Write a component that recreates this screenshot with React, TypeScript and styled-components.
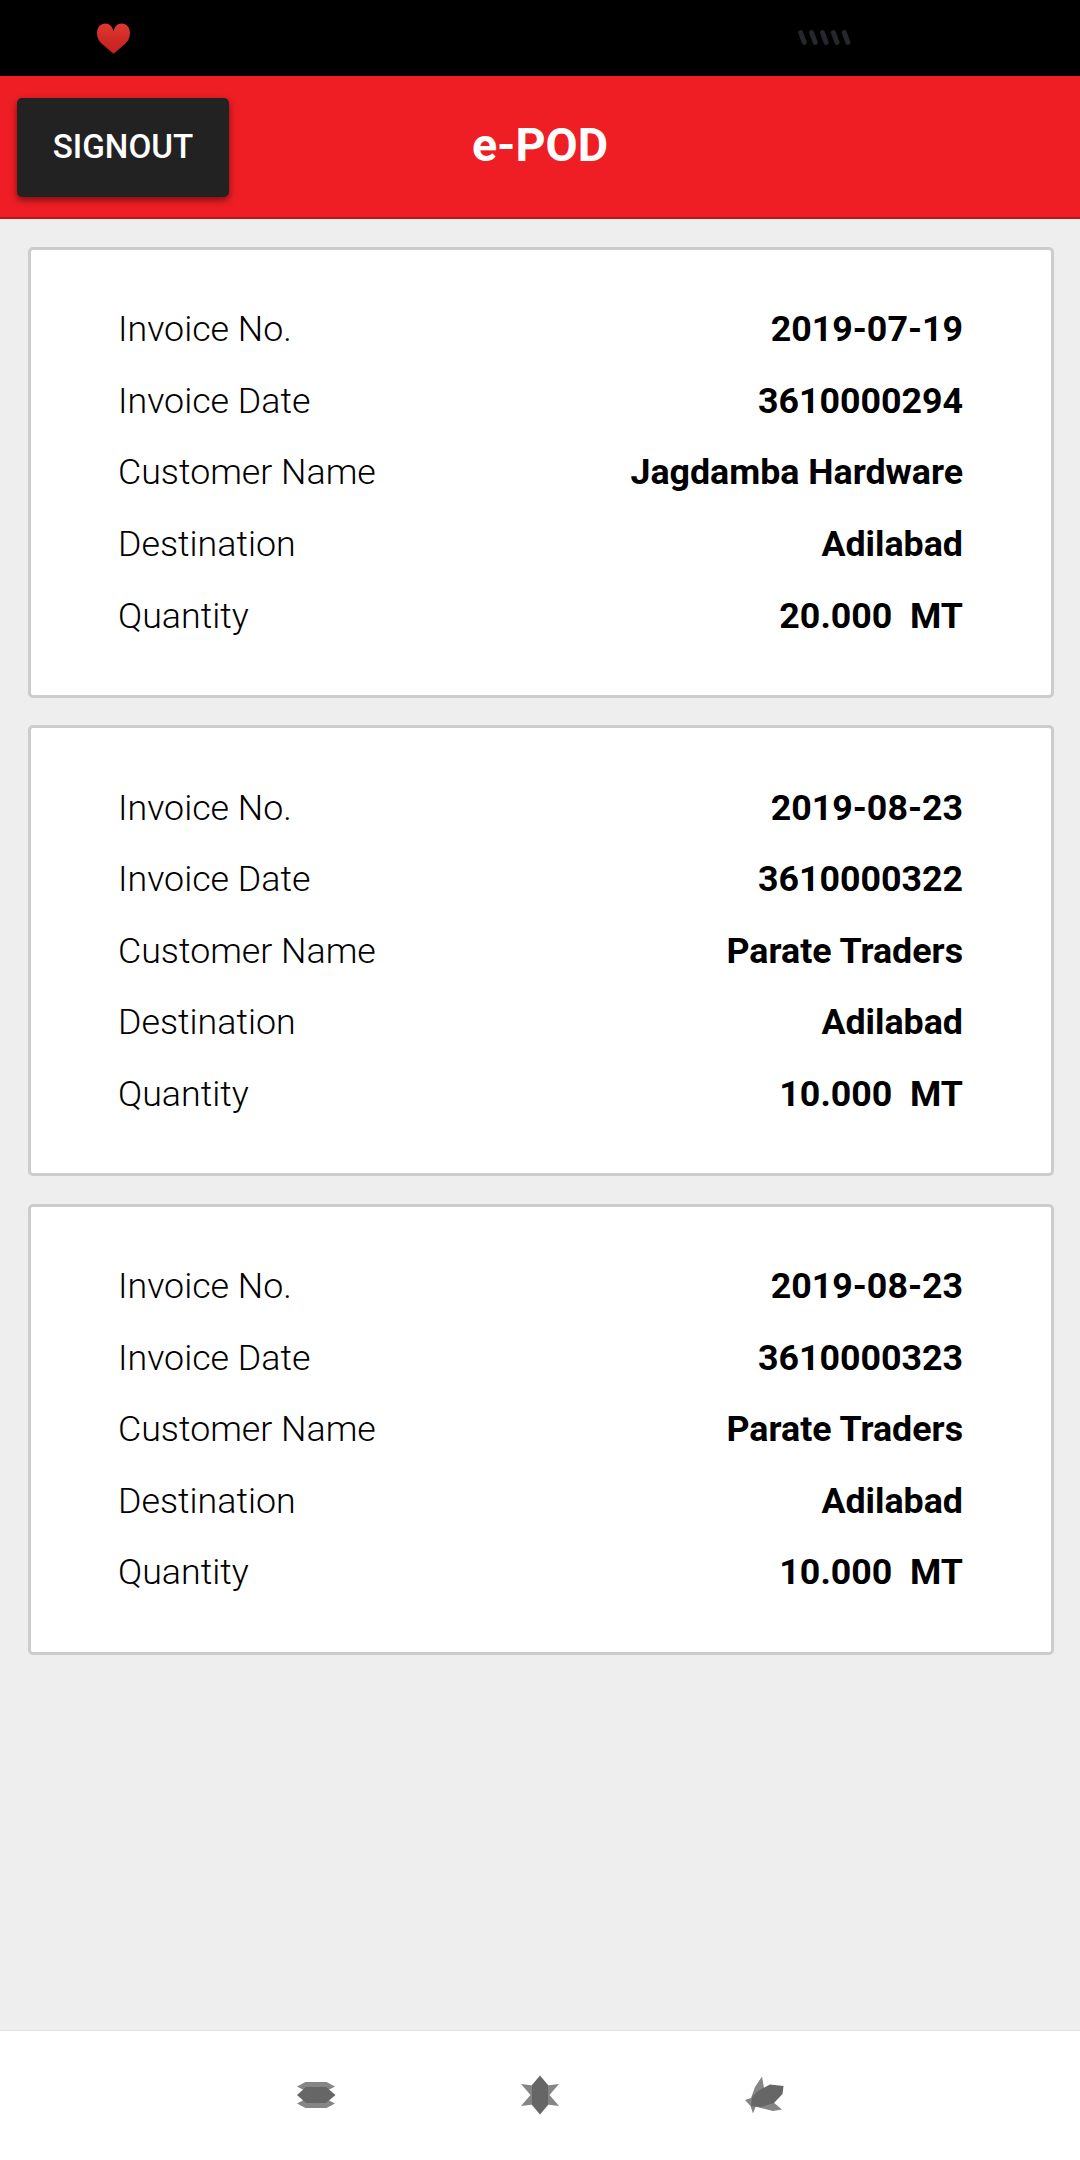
import React from "react";
import styled, { createGlobalStyle } from "styled-components";

const GlobalStyle = createGlobalStyle`
  * { box-sizing: border-box; }
  body { margin: 0; background: #eee; font-family: Roboto, "Liberation Sans", sans-serif; color: #000; }
`;

const Screen = styled.div`
  display: flex;
  flex-direction: column;
  width: 1080px;
  height: 2160px;
  background: #eeeeee;
`;

const StatusBar = styled.div`
  display: flex;
  justify-content: space-between;
  align-items: flex-start;
  height: 76px;
  padding: 23px 229px 0 97px;
  background: #000;
  flex: none;
`;

const Header = styled.header`
  display: grid;
  grid-template-columns: 1fr auto 1fr;
  align-items: center;
  height: 143px;
  padding: 0 17px;
  background: #ef1e25;
  border-bottom: 2px solid #b5181e;
  flex: none;
`;

const SignOut = styled.button`
  justify-self: start;
  width: 212px;
  height: 99px;
  margin-top: 2px;
  padding: 0 0 2px;
  border: 0;
  border-radius: 5px;
  background: #222;
  box-shadow: 0 3px 7px rgba(0, 0, 0, 0.5);
  color: #fff;
  font: 500 33.2px/40px Roboto, "Liberation Sans", sans-serif;
`;

const Title = styled.h1`
  margin: 0 0 3px;
  color: #fff;
  font-size: 46.7px;
  font-weight: 700;
  line-height: 54px;
`;

const List = styled.main`
  display: flex;
  flex-direction: column;
  gap: 27.4px;
  flex: 1;
  padding: 28px 26px 0 28px;
`;

const Card = styled.section`
  display: grid;
  grid-template-rows: repeat(5, 71.6px);
  height: 451px;
  padding: 43.4px 88px 0 87px;
  border: 3px solid #ccc;
  border-radius: 5px;
  background: #fff;
`;

const Row = styled.div`
  display: flex;
  justify-content: space-between;
  align-items: center;
  font-size: 35.75px;
  line-height: 42px;
`;

const Label = styled.span`
  font-weight: 300;
`;

const Value = styled.span`
  font-weight: 700;
  white-space: pre;
`;

const NavBar = styled.nav`
  display: grid;
  grid-template-columns: 220px 225px 80px;
  align-items: center;
  height: 130px;
  padding: 0 0 1px 280px;
  border-top: 1px solid #e4e4e4;
  background: #fff;
  flex: none;
`;

const NavIcon = styled.svg`
  width: 80px;
  height: 70px;
`;

const invoices = [
  ["2019-07-19", "3610000294", "Jagdamba Hardware", "Adilabad", "20.000  MT"],
  ["2019-08-23", "3610000322", "Parate Traders", "Adilabad", "10.000  MT"],
  ["2019-08-23", "3610000323", "Parate Traders", "Adilabad", "10.000  MT"],
];

const labels = ["Invoice No.", "Invoice Date", "Customer Name", "Destination", "Quantity"];

const Heart = () => (
  <svg width="33" height="31" viewBox="0 0 33 31">
    <defs>
      <linearGradient id="heart" x1="0" y1="0" x2="0" y2="1">
        <stop offset="0" stopColor="#df3a30" />
        <stop offset="0.5" stopColor="#cf2a25" />
        <stop offset="1" stopColor="#c82020" />
      </linearGradient>
    </defs>
    <path d="M16.500 8.500C15.500 3.500 12.500.5 8.500.5C3.500.5 0 4.500 0 10C0 14.500 1.500 17.500 4.500 20.500L16.600 30.800L28.500 20.500C31.500 17.500 33 14.500 33 10C33 4.500 29.500.5 24.500.5C20.500.5 17.500 3.500 16.500 8.500Z" fill="url(#heart)" />
  </svg>
);

const Slashes = () => (
  <svg width="53" height="24" viewBox="0 0 53 24">
    {[0, 1, 2, 3, 4].map((i) => (
      <path key={i} d={`M${2.7 + i * 10.9} 9.700l3.600 9.600`} stroke="#26272e" strokeWidth="5" strokeLinecap="round" />
    ))}
  </svg>
);

export default function App() {
  return (
    <>
      <GlobalStyle />
      <Screen>
        <StatusBar>
          <Heart />
          <Slashes />
        </StatusBar>
        <Header>
          <SignOut>SIGNOUT</SignOut>
          <Title>e-POD</Title>
        </Header>
        <List>
          {invoices.map((values, n) => (
            <Card key={n}>
              {labels.map((label, i) => (
                <Row key={label}>
                  <Label>{label}</Label>
                  <Value>{values[i]}</Value>
                </Row>
              ))}
            </Card>
          ))}
        </List>
        <NavBar>
          <NavIcon viewBox="0 0 80 70">
            <path d="M25.500 22H46.500L55 26.500L46.500 31H25.500L17 26.500ZM25.500 39H46.500L55 43.500L46.500 48H25.500L17 43.500Z" fill="#858585" />
            <path d="M26 27H46L55.500 35L46 43H26L17 35Z" fill="#666" />
          </NavIcon>
          <NavIcon viewBox="0 0 80 70">
            <path d="M21 24L33 25.500L40 22L47 25.500L59 24L49.500 35L59 46L47 44.500L40 48L33 44.500L21 46L30.500 35Z" fill="#858585" />
            <path d="M40 15.500L48 25V45L40 54.500L32 45V25Z" fill="#666" />
          </NavIcon>
          <NavIcon viewBox="0 0 80 70">
            <path d="M37 16.500L39 28L34 38L28 53.500L25.500 46L20 40L26 38L30 27Z" fill="#858585" />
            <path d="M26 40L48 42L57 49.500L48 51L26 45.500Z" fill="#858585" />
            <path d="M26 46L27 37L33 31L45 24.500L58.500 26L57.500 34L49 43L36 47Z" fill="#666" />
          </NavIcon>
        </NavBar>
      </Screen>
    </>
  );
}
